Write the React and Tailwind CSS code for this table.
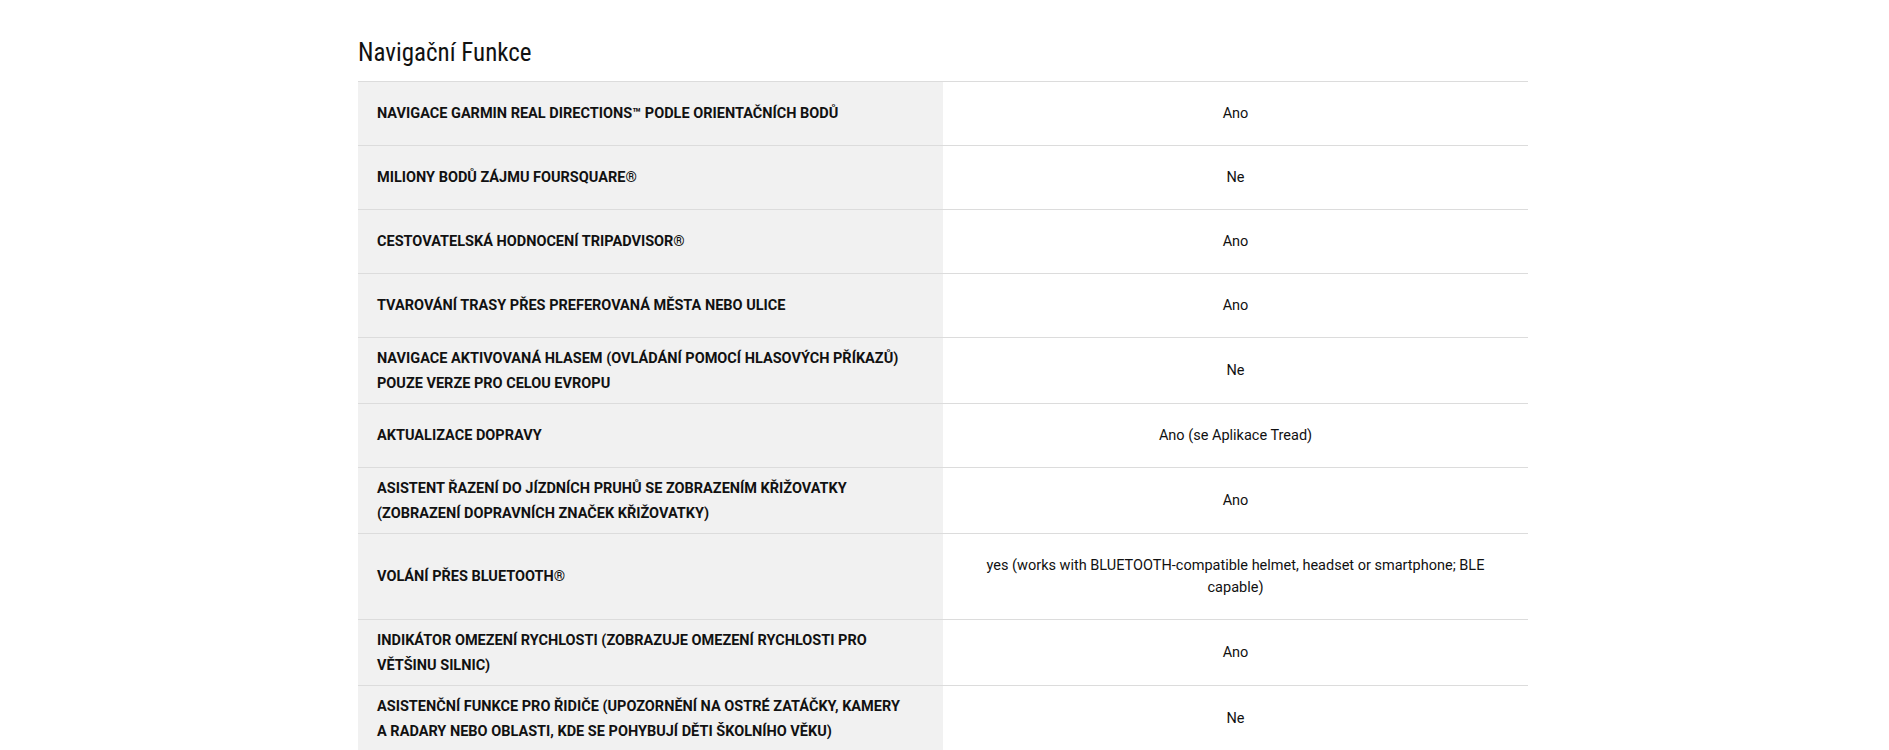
import React from 'react';

const rows = [
  { label: 'Navigace Garmin Real Directions™ podle orientačních bodů', value: 'Ano' },
  { label: 'Miliony bodů zájmu Foursquare®', value: 'Ne' },
  { label: 'Cestovatelská hodnocení TripAdvisor®', value: 'Ano' },
  { label: 'Tvarování trasy přes preferovaná města nebo ulice', value: 'Ano' },
  { label: 'Navigace aktivovaná hlasem (ovládání pomocí hlasových příkazů) pouze verze pro celou Evropu', value: 'Ne' },
  { label: 'Aktualizace dopravy', value: 'Ano (se Aplikace Tread)' },
  { label: 'Asistent řazení do jízdních pruhů se zobrazením křižovatky (zobrazení dopravních značek křižovatky)', value: 'Ano' },
  { label: 'Volání přes BLUETOOTH®', value: 'yes (works with BLUETOOTH-compatible helmet, headset or smartphone; BLE capable)' },
  { label: 'Indikátor omezení rychlosti (zobrazuje omezení rychlosti pro většinu silnic)', value: 'Ano' },
  { label: 'Asistenční funkce pro řidiče (upozornění na ostré zatáčky, kamery a radary nebo oblasti, kde se pohybují děti školního věku)', value: 'Ne' },
];

export default function App() {
  return (
    <div className="min-h-screen bg-white font-['Roboto',sans-serif] text-[#111]">
      <div className="ml-[358px] w-[1170px] pt-[34px]">
        <h2 className="mb-[9px] font-['Roboto',sans-serif] text-[25px] font-normal leading-[38px] font-stretch-[75%] text-[#111]">
          Navigační Funkce
        </h2>
        <div className="border-t border-[#dcdcdc]">
          {rows.map((row) => (
            <div key={row.label} className="flex border-b border-[#dcdcdc]">
              <div className="flex w-1/2 items-center bg-[#f1f1f1] py-[7.5px] pl-[19px]">
                <span className="max-w-[532px] text-[14.5px] font-bold uppercase leading-[25px] text-[#111]">
                  {row.label}
                </span>
              </div>
              <div className="flex w-1/2 items-center justify-center px-[20px] py-[20.5px]">
                <span className="max-w-[525px] text-center text-[14.5px] leading-[22px] text-[#111]">{row.value}</span>
              </div>
            </div>
          ))}
        </div>
      </div>
    </div>
  );
}
